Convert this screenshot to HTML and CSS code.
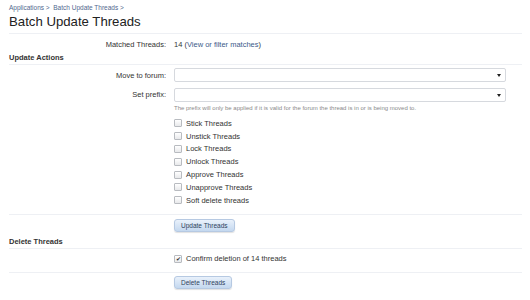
FILE: index.html
```html
<!DOCTYPE html>
<html>
<head>
<meta charset="utf-8">
<link rel="stylesheet" href="styles.css">
</head>
<body>
<div class="page">
  <div class="crumbs"><a>Applications</a> &gt; &nbsp;<a>Batch Update Threads</a> &gt;</div>
  <h1 class="title">Batch Update Threads</h1>
  <div class="row info">
    <div class="label">Matched Threads:</div>
    <div class="ctrl">14 (<a class="link">View or filter matches</a>)</div>
  </div>
  <h2 class="section">Update Actions</h2>
  <div class="row field">
    <div class="label">Move to forum:</div>
    <div class="ctrl"><div class="select"><span class="arrow"></span></div></div>
  </div>
  <div class="row field prefix">
    <div class="label">Set prefix:</div>
    <div class="ctrl">
      <div class="select"><span class="arrow"></span></div>
      <div class="hint">The prefix will only be applied if it is valid for the forum the thread is in or is being moved to.</div>
    </div>
  </div>
  <div class="row checks">
    <div class="label"></div>
    <div class="ctrl list">
      <label class="check"><span class="box"></span>Stick Threads</label>
      <label class="check"><span class="box"></span>Unstick Threads</label>
      <label class="check"><span class="box"></span>Lock Threads</label>
      <label class="check"><span class="box"></span>Unlock Threads</label>
      <label class="check"><span class="box"></span>Approve Threads</label>
      <label class="check"><span class="box"></span>Unapprove Threads</label>
      <label class="check"><span class="box"></span>Soft delete threads</label>
    </div>
  </div>
  <div class="row submit">
    <div class="label"></div>
    <div class="ctrl"><span class="button">Update Threads</span></div>
  </div>
  <h2 class="section">Delete Threads</h2>
  <div class="row checks single">
    <div class="label"></div>
    <div class="ctrl list">
      <label class="check"><span class="box checked">&#10004;</span>Confirm deletion of 14 threads</label>
    </div>
  </div>
  <div class="row submit last">
    <div class="label"></div>
    <div class="ctrl"><span class="button">Delete Threads</span></div>
  </div>
</div>
</body>
</html>
```
FILE: styles.css
```css
html, body {
  margin: 0;
  padding: 0;
  background: #ffffff;
}
body {
  font-family: "Liberation Sans", Arial, sans-serif;
  color: #333;
  width: 530px;
  height: 300px;
  overflow: hidden;
}
.page {
  padding: 3px 8px 0 9px;
}
.crumbs {
  font-size: 6.5px;
  color: #50688e;
  height: 9px;
  line-height: 9px;
}
.title {
  margin: 0;
  font-weight: normal;
  font-size: 13.2px;
  line-height: 19px;
  color: #222;
  padding-bottom: 2px;
  border-bottom: 1px solid #eef0f4;
}
.row {
  display: grid;
  grid-template-columns: 157px 332px;
  column-gap: 8px;
  font-size: 7.5px;
}
.label {
  text-align: right;
  color: #333;
}
.info {
  margin-top: 6px;
  line-height: 10px;
}
.link { color: #3c5a8a; }
.section {
  margin: 0;
  font-size: 7.5px;
  font-weight: bold;
  color: #333;
  line-height: 10px;
  margin-top: 3px;
  padding-bottom: 1px;
  border-bottom: 1px solid #eef0f4;
  width: 513px;
}
.field { align-items: center; margin-top: 3px; }
.field .label { line-height: 13px; }
.field.prefix { align-items: start; margin-top: 6px; }
.select {
  height: 12px;
  border: 1px solid #d6d9de;
  border-radius: 2px;
  background: #fff;
  position: relative;
}
.arrow {
  position: absolute;
  right: 4px;
  top: 5px;
  border-left: 2px solid transparent;
  border-right: 2px solid transparent;
  border-top: 3px solid #222;
}
.hint {
  font-size: 6px;
  color: #8a8a8a;
  margin-top: 2px;
  line-height: 8px;
}
.checks { margin-top: 5px; padding-bottom: 7px; }
.list { display: flex; flex-direction: column; }
.check {
  display: flex;
  align-items: center;
  height: 12.8px;
  color: #333;
}
.box {
  display: inline-block;
  width: 6px;
  height: 6px;
  border: 1px solid #b8bbc0;
  border-radius: 1px;
  background: linear-gradient(#fff, #e8e9eb);
  margin-right: 4px;
  font-size: 6px;
  line-height: 6px;
  text-align: center;
  color: #333;
}
.submit {
  border-top: 1px solid #eef0f4;
  width: 513px;
  padding-top: 4px;
  height: 20px;
  box-sizing: border-box;
}
.checks.single { margin-top: 4px; height: 19px; padding-bottom: 0; }
.submit.last { height: 24px; padding-top: 3px; }
.button {
  display: inline-block;
  font-size: 6.5px;
  color: #2d3f5c;
  padding: 0 6px;
  height: 11px;
  line-height: 11px;
  border-radius: 3px;
  background: linear-gradient(#e9f1fb, #c4d8ef);
  border: 1px solid #b6c9e2;
  box-shadow: 0 1px 1px rgba(0,0,0,0.12);
}
```
